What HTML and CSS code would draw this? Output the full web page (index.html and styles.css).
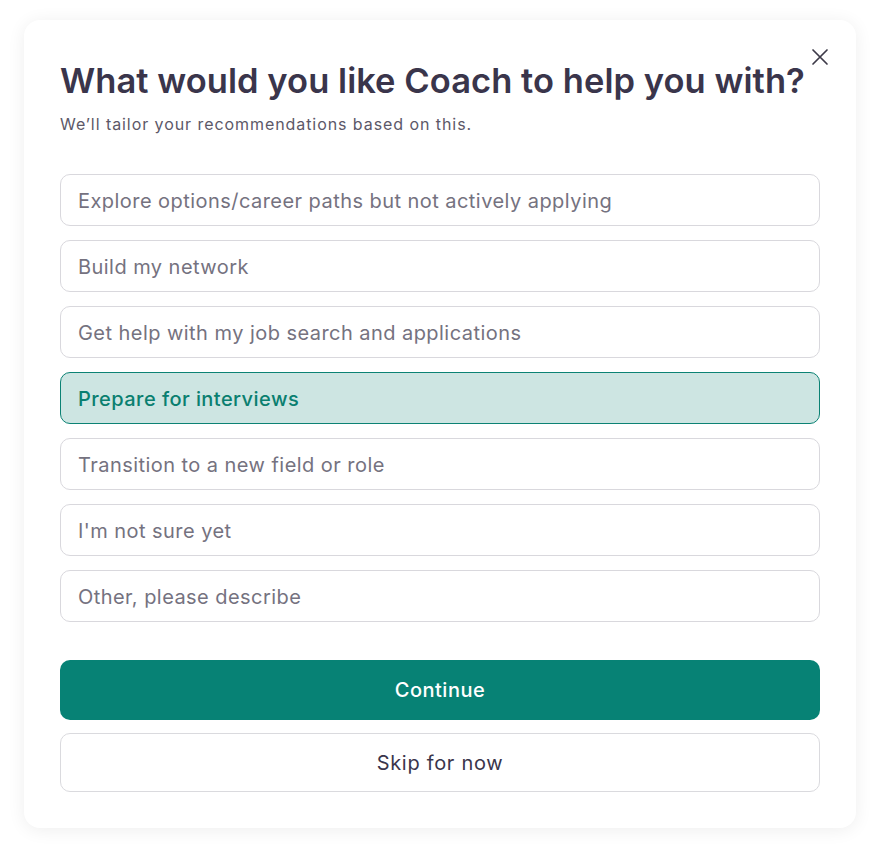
FILE: index.html
```html
<!DOCTYPE html>
<html lang="en">
<head>
<meta charset="utf-8">
<link rel="stylesheet" href="styles.css">
</head>
<body>
<div class="card">
  <button class="close" aria-label="Close">
    <svg width="18" height="18" viewBox="0 0 18 18"><path d="M2 2 L16 16 M16 2 L2 16" stroke="#3d3a48" stroke-width="1.7" stroke-linecap="round" fill="none"/></svg>
  </button>
  <h1 class="title">What would you like Coach to help you with?</h1>
  <p class="subtitle">We’ll tailor your recommendations based on this.</p>
  <div class="options">
    <div class="option">Explore options/career paths but not actively applying</div>
    <div class="option">Build my network</div>
    <div class="option">Get help with my job search and applications</div>
    <div class="option selected">Prepare for interviews</div>
    <div class="option">Transition to a new field or role</div>
    <div class="option">I'm not sure yet</div>
    <div class="option">Other, please describe</div>
  </div>
  <div class="actions">
    <button class="btn primary">Continue</button>
    <button class="btn secondary">Skip for now</button>
  </div>
</div>
</body>
</html>
```
FILE: styles.css
```css
* { box-sizing: border-box; }
html, body { margin: 0; padding: 0; background: #ffffff; }
body {
  font-family: Inter, "Noto Sans", sans-serif;
  padding: 20px 25px 27px 24px;
}
.card {
  position: relative;
  background: #fff;
  border-radius: 16px;
  box-shadow: 0 2px 18px rgba(0, 0, 0, 0.07);
  padding: 40px 36px 36px 36px;
  width: 832px;
}
.close {
  position: absolute;
  top: 28px;
  right: 27px;
  background: none;
  border: 0;
  padding: 0;
  width: 18px;
  height: 18px;
  cursor: pointer;
}
.close svg { display: block; }
.title {
  margin: 0;
  font-size: 34.5px;
  line-height: 42px;
  font-weight: 600;
  color: #3a354b;
  letter-spacing: 0.05px;
}
.subtitle {
  margin: 11.5px 0 0;
  font-size: 16px;
  line-height: 20px;
  letter-spacing: 0.93px;
  color: #5c5868;
}
.options {
  margin-top: 40.5px;
  display: flex;
  flex-direction: column;
  gap: 14px;
}
.option {
  height: 52px;
  border: 1.5px solid #d9d8dd;
  border-radius: 10px;
  display: flex;
  align-items: center;
  padding: 2px 17px 0;
  font-size: 20px;
  letter-spacing: 0.45px;
  color: #75727f;
}
.option.selected {
  background: #cde5e2;
  border-color: #0b8274;
  color: #0a7f70;
  font-weight: 500;
}
.actions {
  margin-top: 38px;
  display: flex;
  flex-direction: column;
  gap: 13px;
}
.btn {
  font-family: Inter, "Noto Sans", sans-serif;
  font-size: 20px;
  border-radius: 10px;
  width: 100%;
  cursor: pointer;
}
.btn.primary {
  height: 60px;
  background: #078275;
  border: 0;
  color: #fff;
  font-weight: 500;
  letter-spacing: 0.5px;
}
.btn.secondary {
  height: 59px;
  background: #fff;
  border: 1.5px solid #dadade;
  color: #3a354b;
  font-weight: 400;
  letter-spacing: 0.7px;
}
```
